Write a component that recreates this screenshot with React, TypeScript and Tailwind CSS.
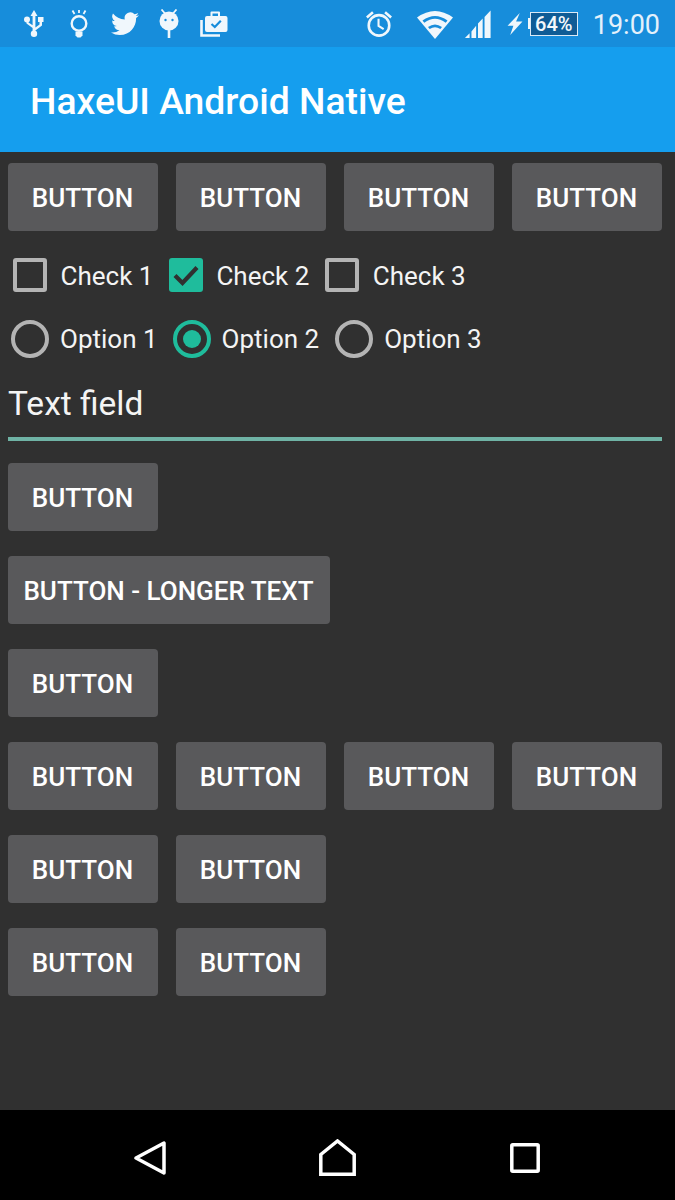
import React from "react";

const font = { fontFamily: "Roboto, sans-serif" };

function Btn({ label = "BUTTON", wide = false }: { label?: string; wide?: boolean }) {
  return (
    <div
      className={`h-[68px] ${wide ? "w-[322px]" : "w-[150px]"} shrink-0 rounded-[4px] bg-[#59595b] flex items-center justify-center pt-[1px] pr-[1px] text-white text-[26px] font-medium leading-none`}
    >
      {label}
    </div>
  );
}

function Check({ checked, label }: { checked?: boolean; label: string }) {
  return (
    <div className="flex items-center">
      {checked ? (
        <div className="w-[34px] h-[34px] rounded-[3px] bg-[#1fbc9c] flex items-center justify-center">
          <svg width="34" height="34" viewBox="0 0 34 34" fill="none">
            <path d="M6 17.500 L13.500 25 L28 9.500" stroke="#303030" strokeWidth="4.200" />
          </svg>
        </div>
      ) : (
        <div className="w-[34px] h-[34px] rounded-[3px] border-[4px] border-[#b4b4b4]" />
      )}
      <span className="ml-[13.500px] pt-[2px] text-[26px] text-[#f4f4f4] leading-none">{label}</span>
    </div>
  );
}

function Radio({ checked, label }: { checked?: boolean; label: string }) {
  return (
    <div className="flex items-center">
      <div
        className={`w-[38px] h-[38px] rounded-full border-[4px] flex items-center justify-center ${
          checked ? "border-[#1fbc9c]" : "border-[#b4b4b4]"
        }`}
      >
        {checked && <div className="w-[18px] h-[18px] rounded-full bg-[#1fbc9c]" />}
      </div>
      <span className="ml-[11px] text-[26px] text-[#f4f4f4] leading-none">{label}</span>
    </div>
  );
}

function StatusLeft() {
  const c = "#f0f7fc";
  return (
    <div className="flex items-center ml-[24px] h-full">
      <svg width="20" height="27" viewBox="0 0 20 27" fill="none" className="mr-[26px]">
        <path d="M10 0 L13.500 6 H11.400 V17.500 L15.500 14.500 V12 H14 V7 H19.500 V12 H18 V15.500 L11.400 20.500 V23 H8.600 V18 L2.500 13.500 V11 H4.500 V12.500 L8.600 15.300 V6 H6.500 Z" fill={c} />
        <circle cx="3" cy="9.500" r="3" fill={c} />
        <circle cx="10" cy="23.800" r="3.200" fill={c} />
      </svg>
      <svg width="18" height="28" viewBox="0 0 18 28" fill="none" className="mr-[23px]">
        <path d="M2.500 0.500 L4.500 4 M9 0 V3 M15.500 0.500 L13.500 4" stroke={c} strokeWidth="1.800" />
        <circle cx="9" cy="13.500" r="7.300" stroke={c} strokeWidth="2.400" />
        <path d="M5.500 21.500 H12.500 V25.500 L10.500 27.500 H7.500 L5.500 25.500 Z" fill={c} />
      </svg>
      <svg width="28" height="24" viewBox="0 0 24 20" className="mr-[20px]">
        <path
          fill={c}
          d="M24 2.400a9.800 9.800 0 0 1-2.800.8 4.900 4.900 0 0 0 2.100-2.700 9.900 9.900 0 0 1-3.100 1.200A4.900 4.900 0 0 0 11.800 6.100 14 14 0 0 1 1.700.9a4.900 4.900 0 0 0 1.500 6.600 4.900 4.900 0 0 1-2.200-.6v.1a4.900 4.900 0 0 0 3.900 4.800 4.900 4.900 0 0 1-2.200.1 4.900 4.900 0 0 0 4.600 3.400A9.900 9.900 0 0 1 0 17.300 14 14 0 0 0 7.500 19.500c9.100 0 14-7.500 14-14v-.6A10 10 0 0 0 24 2.400Z"
        />
      </svg>
      <svg width="20" height="29" viewBox="0 0 20 29" fill="none" className="mr-[21px]">
        <path d="M2.500 0.500 L6 4.500 M17.500 0.500 L14 4.500" stroke={c} strokeWidth="1.800" />
        <circle cx="10" cy="12" r="9.500" fill={c} />
        <rect x="8.700" y="20" width="2.600" height="9" fill={c} />
        <circle cx="6.500" cy="11" r="1.200" fill="#178ddb" />
        <circle cx="13.500" cy="11" r="1.200" fill="#178ddb" />
      </svg>
      <svg width="28" height="26" viewBox="0 0 28 26" fill="none">
        <path d="M1.500 9 V24.500 H20" stroke={c} strokeWidth="2.600" />
        <path d="M5 7 Q5 5 7 5 H10.500 V1.500 Q10.500 0.500 11.500 0.500 H19 Q20 0.500 20 1.500 V5 H25.500 Q27.500 5 27.500 7 V19 Q27.500 21 25.500 21 H7 Q5 21 5 19 Z" fill={c} />
        <rect x="12.500" y="2.500" width="5.500" height="2.500" fill="#178ddb" />
        <path d="M11.500 13 L14.800 16 L20.800 9.800" stroke="#178ddb" strokeWidth="2.200" />
      </svg>
    </div>
  );
}

function StatusRight() {
  const c = "#f0f7fc";
  return (
    <div className="flex items-center h-full mr-[15px]">
      <svg width="28" height="28" viewBox="0 0 30 30" fill="none" className="mr-[24px]">
        <circle cx="15" cy="16.500" r="11" stroke={c} strokeWidth="2.800" />
        <path d="M14.500 9.500 V17 L20 20.500" stroke={c} strokeWidth="2.200" />
        <path d="M2 8 L8.500 2.500 M28 8 L21.500 2.500" stroke={c} strokeWidth="2.800" />
      </svg>
      <svg width="36" height="30" viewBox="0 0 36 30" className="mr-[11px]">
        <path d="M0 8.500 Q18 -4.500 36 8.500 L18 30 Z" fill={c} />
        <path d="M5.500 11.500 Q18 2.500 30.500 11.500 L28.700 13.700 Q18 6 7.300 13.700 Z" fill="#178ddb" />
        <path d="M11 18 Q18 13 25 18 L23.300 20 Q18 16.500 12.700 20 Z" fill="#178ddb" />
      </svg>
      <svg width="28" height="28" viewBox="0 0 28 30" className="mr-[15px]">
        <path d="M0 30 L5 25 V30 Z M7 23 L12 17 V30 H7 Z M14 14.500 L19 9 V30 H14 Z" fill={c} />
        <path d="M21 7.500 L27.500 0.500 V30 H21 Z" fill={c} />
      </svg>
      <svg width="16" height="22" viewBox="0 0 15 26" preserveAspectRatio="none" className="mr-[5px]">
        <path d="M12 0 L0.500 15 H6 L3 26 L14.500 10 H8.500 Z" fill={c} />
      </svg>
      <div className="relative flex items-center mr-[15px]">
        <div className="w-[2px] h-[11px] bg-[#f0f7fc]" />
        <div className="w-[48px] h-[24px] border-[1.500px] border-[#dbeaf6] bg-[#0f5c96] flex items-center justify-center text-[#f4f8fb] text-[20px] font-medium leading-none">
          64%
        </div>
      </div>
      <span className="pt-[3px] text-[27px] text-[#e4f1fb] leading-none">19:00</span>
    </div>
  );
}

export default function App() {
  return (
    <div style={font} className="w-[675px] h-[1200px] flex flex-col bg-[#303030] overflow-hidden">
      <div className="h-[47px] bg-[#178ddb] flex items-center justify-between shrink-0">
        <StatusLeft />
        <StatusRight />
      </div>
      <div className="h-[105px] bg-[#159eee] flex items-center pl-[30px] pt-[4px] shrink-0">
        <span className="text-white text-[37.300px] font-medium leading-none">HaxeUI Android Native</span>
      </div>

      <div className="flex-1 px-[8px] pt-[11px]">
        <div className="flex gap-[18px]">
          <Btn /><Btn /><Btn /><Btn />
        </div>
        <div className="flex items-center mt-[27px] ml-[5px] h-[34px]">
          <Check label="Check 1" />
          <div className="ml-[15.500px]"><Check checked label="Check 2" /></div>
          <div className="ml-[16px]"><Check label="Check 3" /></div>
        </div>
        <div className="flex items-center mt-[28px] ml-[3px] h-[38px]">
          <Radio label="Option 1" />
          <div className="ml-[15px]"><Radio checked label="Option 2" /></div>
          <div className="ml-[16px]"><Radio label="Option 3" /></div>
        </div>
        <div className="mt-[25px] h-[54px] text-[33.500px] text-[#f4f4f4] leading-[42px]">Text field</div>
        <div className="h-[4px] w-[654px] bg-[#6fb3a5]" />
        <div className="mt-[22px] flex flex-col gap-[25px]">
          <Btn />
          <Btn wide label="BUTTON - LONGER TEXT" />
          <Btn />
          <div className="flex gap-[18px]"><Btn /><Btn /><Btn /><Btn /></div>
          <div className="flex gap-[18px]"><Btn /><Btn /></div>
          <div className="flex gap-[18px]"><Btn /><Btn /></div>
        </div>
      </div>

      <div className="h-[90px] bg-black shrink-0 flex items-center justify-between pl-[134px] pr-[135px] pt-[6px]">
        <svg width="32" height="34" viewBox="0 0 32 34" fill="none">
          <path d="M2 17 L30 2 V32 Z" stroke="white" strokeWidth="3.500" strokeLinejoin="round" />
        </svg>
        <svg width="37" height="37" viewBox="0 0 37 37" fill="none" className="mr-[2px] mb-[2px]">
          <path d="M1.800 35.200 V15.500 L18.500 2 L35.200 15.500 V35.200 Z" stroke="white" strokeWidth="3.500" strokeLinejoin="miter" />
        </svg>
        <svg width="30" height="30" viewBox="0 0 30 30" fill="none">
          <rect x="1.800" y="1.800" width="26.400" height="26.400" rx="1" stroke="white" strokeWidth="3.500" />
        </svg>
      </div>
    </div>
  );
}
